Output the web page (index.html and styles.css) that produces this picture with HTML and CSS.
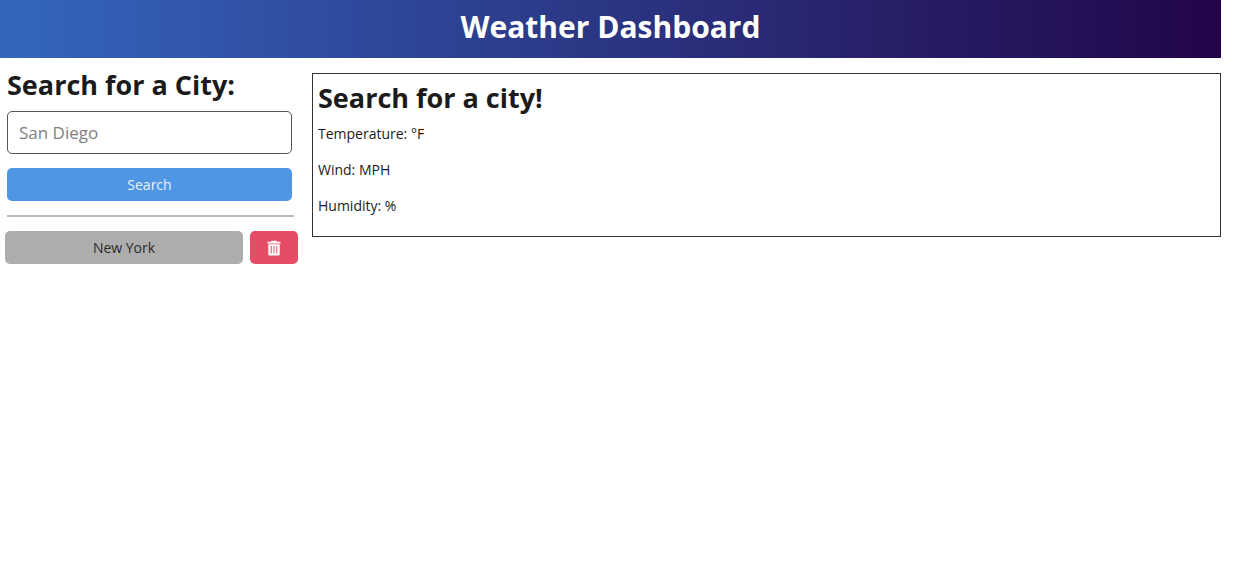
FILE: index.html
```
<!DOCTYPE html>
<html lang="en">
<head>
<meta charset="utf-8">
<meta name="viewport" content="width=device-width, initial-scale=1">
<title>Weather Dashboard</title>
<link rel="stylesheet" href="styles.css">
</head>
<body>
<header class="header"><h1 class="header-title">Weather Dashboard</h1></header>
<main class="layout">
  <aside class="sidebar">
    <form class="search-form">
      <label class="heading" for="city">Search for a City:</label>
      <input class="search-input" id="city" type="text" placeholder="San Diego">
      <button class="button button-search" type="button">Search</button>
    </form>
    <hr class="divider">
    <div class="history-row">
      <button class="button button-city" type="button">New York</button>
      <button class="button button-delete" type="button" aria-label="Delete New York">
        <svg class="trash" viewBox="0 0 14 16" aria-hidden="true">
          <path fill="#fff" fill-rule="evenodd" d="M4.4 0.8h5.2v1H13.500v1.700H.5V1.800h3.900zM1.300 4.200h11.400V14.200q0 1.300-1.300 1.300H2.600q-1.300 0-1.300-1.300zM3.700 6v7.500h1V6zM6.500 6v7.500h1V6zM9.300 6v7.500h1V6z"/>
        </svg>
      </button>
    </div>
  </aside>
  <section class="weather">
    <h2 class="heading">Search for a city!</h2>
    <p class="reading">Temperature: °F</p>
    <p class="reading">Wind: MPH</p>
    <p class="reading">Humidity: %</p>
  </section>
</main>
</body>
</html>
```
FILE: styles.css
```
* {
  box-sizing: border-box;
}

body {
  margin: 0;
  padding-right: 13px;
  background: #fff;
  color: #1b1b1b;
  font-family: "Segoe UI", "Open Sans", "Noto Sans", sans-serif;
  font-size: 14px;
  line-height: 20px;
}

.header {
  padding: 7px 0 11px;
  background: linear-gradient(to right, #3466be, #220548);
  color: #fff;
  text-align: center;
}

.header-title {
  margin: 0;
  font-size: 30px;
  line-height: 40px;
}

.layout {
  display: flex;
  align-items: flex-start;
  gap: 14px;
  padding-top: 15px;
}

.sidebar {
  flex: 0 0 298px;
}

.search-form {
  display: flex;
  flex-direction: column;
  padding: 0 6px 0 7px;
}

.heading {
  display: block;
  margin: 0;
  font-size: 27px;
  font-weight: 700;
  line-height: 24px;
}

.search-input {
  width: 100%;
  height: 43px;
  margin: 14px 0;
  padding: 0 11px;
  border: 1px solid #555;
  border-radius: 5px;
  background: #fff;
  color: #1b1b1b;
  font: inherit;
  font-size: 17px;
}

.search-input::placeholder {
  color: #7f7f7f;
}

.button {
  display: flex;
  align-items: center;
  justify-content: center;
  height: 33px;
  padding: 0;
  border: 0;
  border-radius: 5px;
  font: inherit;
  cursor: pointer;
}

.button-search {
  background: #4f96e5;
  color: #e8f2ff;
}

.divider {
  height: 2px;
  margin: 14px 4px 14px 7px;
  border: 0;
  background: #bbb;
}

.history-row {
  display: flex;
  gap: 7px;
  padding-left: 5px;
}

.button-city {
  flex: 1;
  background: #adadad;
  color: #2b2b2b;
}

.button-delete {
  flex: 0 0 48px;
  background: #e74c66;
}

.trash {
  width: 14px;
  height: 16px;
}

.weather {
  flex: 1;
  padding: 12px 5px 20px;
  border: 1px solid #333;
}

.weather .heading {
  margin-bottom: 14px;
}

.reading {
  margin: 0 0 16px;
}

.reading:last-child {
  margin: 0;
}
```
